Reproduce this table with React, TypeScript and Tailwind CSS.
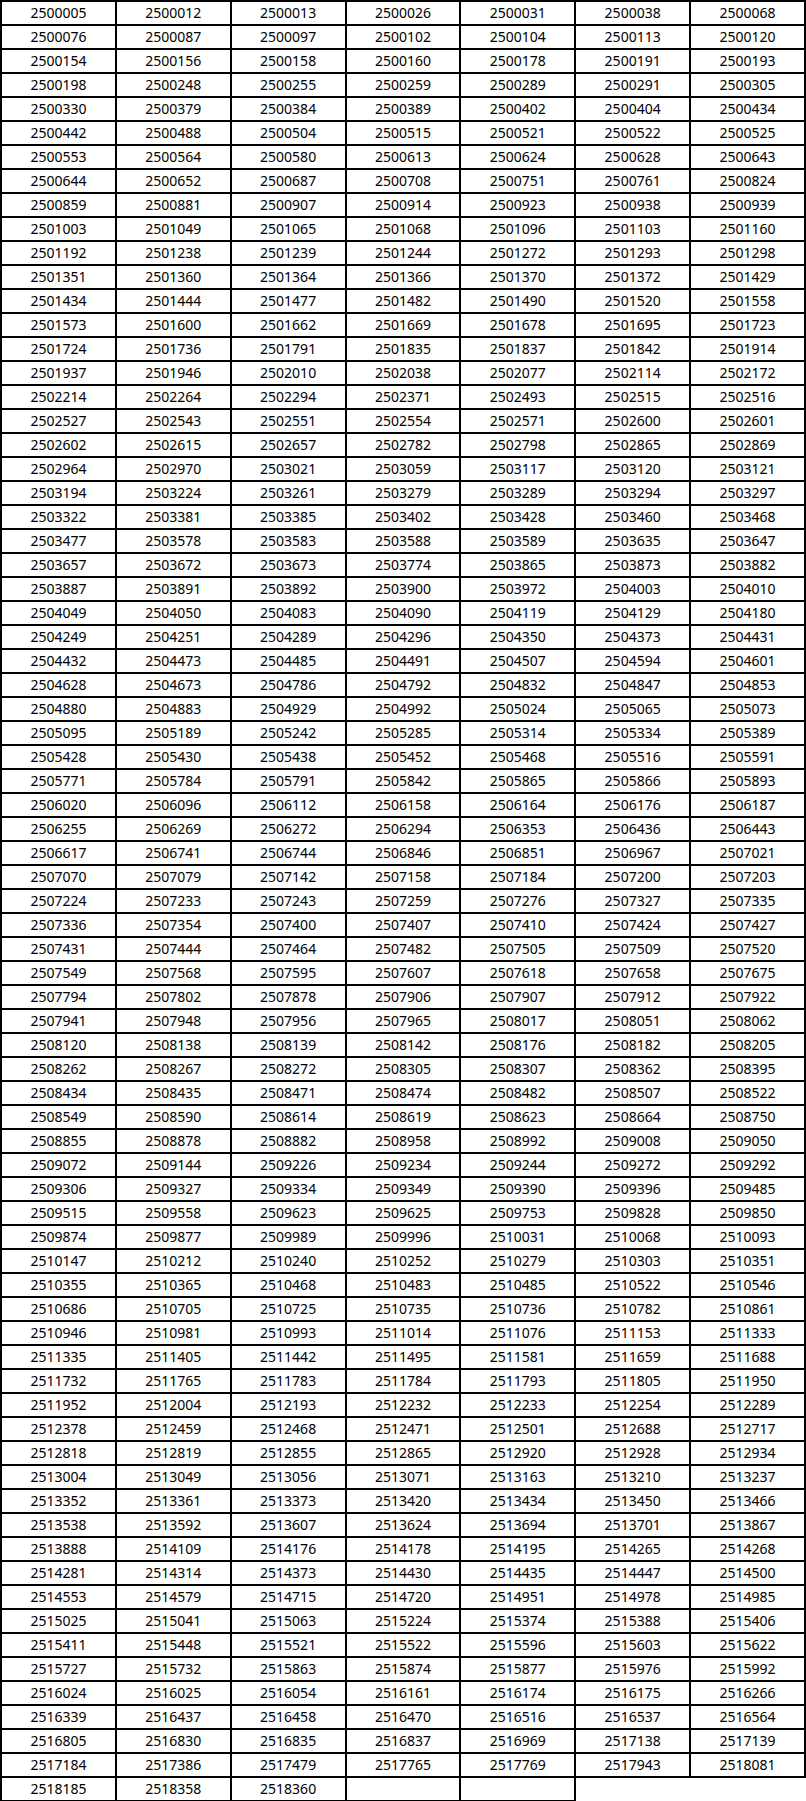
import React from "react";

// 7 numbers per row, last row is short (3 numbers + 2 empty cells)
const DATA = `
2500005 2500012 2500013 2500026 2500031 2500038 2500068
2500076 2500087 2500097 2500102 2500104 2500113 2500120
2500154 2500156 2500158 2500160 2500178 2500191 2500193
2500198 2500248 2500255 2500259 2500289 2500291 2500305
2500330 2500379 2500384 2500389 2500402 2500404 2500434
2500442 2500488 2500504 2500515 2500521 2500522 2500525
2500553 2500564 2500580 2500613 2500624 2500628 2500643
2500644 2500652 2500687 2500708 2500751 2500761 2500824
2500859 2500881 2500907 2500914 2500923 2500938 2500939
2501003 2501049 2501065 2501068 2501096 2501103 2501160
2501192 2501238 2501239 2501244 2501272 2501293 2501298
2501351 2501360 2501364 2501366 2501370 2501372 2501429
2501434 2501444 2501477 2501482 2501490 2501520 2501558
2501573 2501600 2501662 2501669 2501678 2501695 2501723
2501724 2501736 2501791 2501835 2501837 2501842 2501914
2501937 2501946 2502010 2502038 2502077 2502114 2502172
2502214 2502264 2502294 2502371 2502493 2502515 2502516
2502527 2502543 2502551 2502554 2502571 2502600 2502601
2502602 2502615 2502657 2502782 2502798 2502865 2502869
2502964 2502970 2503021 2503059 2503117 2503120 2503121
2503194 2503224 2503261 2503279 2503289 2503294 2503297
2503322 2503381 2503385 2503402 2503428 2503460 2503468
2503477 2503578 2503583 2503588 2503589 2503635 2503647
2503657 2503672 2503673 2503774 2503865 2503873 2503882
2503887 2503891 2503892 2503900 2503972 2504003 2504010
2504049 2504050 2504083 2504090 2504119 2504129 2504180
2504249 2504251 2504289 2504296 2504350 2504373 2504431
2504432 2504473 2504485 2504491 2504507 2504594 2504601
2504628 2504673 2504786 2504792 2504832 2504847 2504853
2504880 2504883 2504929 2504992 2505024 2505065 2505073
2505095 2505189 2505242 2505285 2505314 2505334 2505389
2505428 2505430 2505438 2505452 2505468 2505516 2505591
2505771 2505784 2505791 2505842 2505865 2505866 2505893
2506020 2506096 2506112 2506158 2506164 2506176 2506187
2506255 2506269 2506272 2506294 2506353 2506436 2506443
2506617 2506741 2506744 2506846 2506851 2506967 2507021
2507070 2507079 2507142 2507158 2507184 2507200 2507203
2507224 2507233 2507243 2507259 2507276 2507327 2507335
2507336 2507354 2507400 2507407 2507410 2507424 2507427
2507431 2507444 2507464 2507482 2507505 2507509 2507520
2507549 2507568 2507595 2507607 2507618 2507658 2507675
2507794 2507802 2507878 2507906 2507907 2507912 2507922
2507941 2507948 2507956 2507965 2508017 2508051 2508062
2508120 2508138 2508139 2508142 2508176 2508182 2508205
2508262 2508267 2508272 2508305 2508307 2508362 2508395
2508434 2508435 2508471 2508474 2508482 2508507 2508522
2508549 2508590 2508614 2508619 2508623 2508664 2508750
2508855 2508878 2508882 2508958 2508992 2509008 2509050
2509072 2509144 2509226 2509234 2509244 2509272 2509292
2509306 2509327 2509334 2509349 2509390 2509396 2509485
2509515 2509558 2509623 2509625 2509753 2509828 2509850
2509874 2509877 2509989 2509996 2510031 2510068 2510093
2510147 2510212 2510240 2510252 2510279 2510303 2510351
2510355 2510365 2510468 2510483 2510485 2510522 2510546
2510686 2510705 2510725 2510735 2510736 2510782 2510861
2510946 2510981 2510993 2511014 2511076 2511153 2511333
2511335 2511405 2511442 2511495 2511581 2511659 2511688
2511732 2511765 2511783 2511784 2511793 2511805 2511950
2511952 2512004 2512193 2512232 2512233 2512254 2512289
2512378 2512459 2512468 2512471 2512501 2512688 2512717
2512818 2512819 2512855 2512865 2512920 2512928 2512934
2513004 2513049 2513056 2513071 2513163 2513210 2513237
2513352 2513361 2513373 2513420 2513434 2513450 2513466
2513538 2513592 2513607 2513624 2513694 2513701 2513867
2513888 2514109 2514176 2514178 2514195 2514265 2514268
2514281 2514314 2514373 2514430 2514435 2514447 2514500
2514553 2514579 2514715 2514720 2514951 2514978 2514985
2515025 2515041 2515063 2515224 2515374 2515388 2515406
2515411 2515448 2515521 2515522 2515596 2515603 2515622
2515727 2515732 2515863 2515874 2515877 2515976 2515992
2516024 2516025 2516054 2516161 2516174 2516175 2516266
2516339 2516437 2516458 2516470 2516516 2516537 2516564
2516805 2516830 2516835 2516837 2516969 2517138 2517139
2517184 2517386 2517479 2517765 2517769 2517943 2518081
2518185 2518358 2518360 - -
`;

const rows = DATA.trim()
  .split("\n")
  .map((line) => line.trim().split(/\s+/).map((v) => (v === "-" ? "" : v)));

export default function App() {
  return (
    <div className="bg-white w-[806px]">
      <table
        className="table-fixed border-collapse text-black text-[14px]"
        style={{ fontFamily: '"Noto Sans", "Open Sans", sans-serif' }}
      >
        <colgroup>
          {Array.from({ length: 7 }).map((_, i) => (
            <col key={i} className="w-[115px]" />
          ))}
        </colgroup>
        <tbody>
          {rows.map((cells, r) => (
            <tr key={r} className="h-[24px]">
              {cells.map((c, i) => (
                <td
                  key={i}
                  className="border-2 border-black text-center p-0 leading-[20px]"
                >
                  {c}
                </td>
              ))}
            </tr>
          ))}
        </tbody>
      </table>
    </div>
  );
}
